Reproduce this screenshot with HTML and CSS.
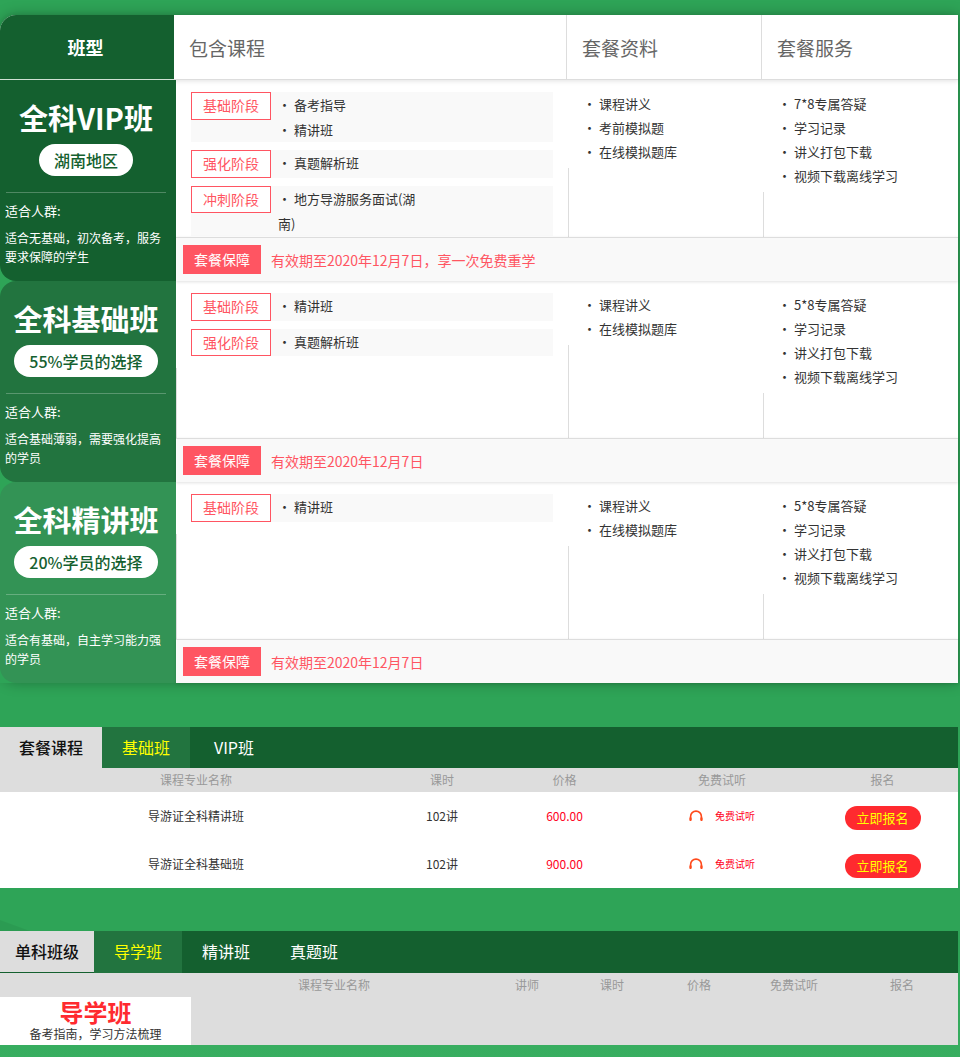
FILE: index.html
```html
<!DOCTYPE html>
<html lang="zh-CN">
<head>
<meta charset="utf-8">
<title>套餐对比</title>
<link rel="stylesheet" href="styles.css">
</head>
<body>
<main class="page">
  <section class="compare">
    <div class="compare-head">
      <div class="head-type">班型</div>
      <div class="head-cell head-course">包含课程</div>
      <div class="head-cell head-mat">套餐资料</div>
      <div class="head-cell head-srv">套餐服务</div>
    </div>

    <div class="plan">
      <div class="plan-side side-dark">
        <h2 class="plan-title">全科VIP班</h2>
        <div class="plan-pill">湖南地区</div>
        <hr class="plan-rule">
        <div class="plan-label">适合人群:</div>
        <p class="plan-desc">适合无基础，初次备考，服务要求保障的学生</p>
      </div>
      <div class="plan-main">
        <div class="plan-body">
          <div class="col-course"><div class="course-list">
            <div class="stage"><span class="stage-tag">基础阶段</span><div class="stage-items"><span class="stage-item">· 备考指导</span><span class="stage-item">· 精讲班</span></div></div>
            <div class="stage"><span class="stage-tag">强化阶段</span><div class="stage-items"><span class="stage-item">· 真题解析班</span></div></div>
            <div class="stage"><span class="stage-tag">冲刺阶段</span><div class="stage-items"><span class="stage-item">· 地方导游服务面试(湖南)</span></div></div>
          </div></div>
          <div class="col-list"><ul class="bullets">
            <li>· 课程讲义</li><li>· 考前模拟题</li><li>· 在线模拟题库</li>
          </ul></div>
          <div class="col-list"><ul class="bullets">
            <li>· 7*8专属答疑</li><li>· 学习记录</li><li>· 讲义打包下载</li><li>· 视频下载离线学习</li>
          </ul></div>
        </div>
        <div class="plan-foot"><span class="foot-tag">套餐保障</span><span class="foot-text">有效期至2020年12月7日，享一次免费重学</span></div>
      </div>
    </div>

    <div class="plan">
      <div class="plan-side side-mid">
        <h2 class="plan-title">全科基础班</h2>
        <div class="plan-pill">55%学员的选择</div>
        <hr class="plan-rule">
        <div class="plan-label">适合人群:</div>
        <p class="plan-desc">适合基础薄弱，需要强化提高的学员</p>
      </div>
      <div class="plan-main">
        <div class="plan-body">
          <div class="col-course"><div class="course-list">
            <div class="stage"><span class="stage-tag">基础阶段</span><div class="stage-items"><span class="stage-item">· 精讲班</span></div></div>
            <div class="stage"><span class="stage-tag">强化阶段</span><div class="stage-items"><span class="stage-item">· 真题解析班</span></div></div>
          </div></div>
          <div class="col-list"><ul class="bullets">
            <li>· 课程讲义</li><li>· 在线模拟题库</li>
          </ul></div>
          <div class="col-list"><ul class="bullets">
            <li>· 5*8专属答疑</li><li>· 学习记录</li><li>· 讲义打包下载</li><li>· 视频下载离线学习</li>
          </ul></div>
        </div>
        <div class="plan-foot"><span class="foot-tag">套餐保障</span><span class="foot-text">有效期至2020年12月7日</span></div>
      </div>
    </div>

    <div class="plan">
      <div class="plan-side side-light">
        <h2 class="plan-title">全科精讲班</h2>
        <div class="plan-pill">20%学员的选择</div>
        <hr class="plan-rule">
        <div class="plan-label">适合人群:</div>
        <p class="plan-desc">适合有基础，自主学习能力强的学员</p>
      </div>
      <div class="plan-main">
        <div class="plan-body">
          <div class="col-course"><div class="course-list">
            <div class="stage"><span class="stage-tag">基础阶段</span><div class="stage-items"><span class="stage-item">· 精讲班</span></div></div>
          </div></div>
          <div class="col-list"><ul class="bullets">
            <li>· 课程讲义</li><li>· 在线模拟题库</li>
          </ul></div>
          <div class="col-list"><ul class="bullets">
            <li>· 5*8专属答疑</li><li>· 学习记录</li><li>· 讲义打包下载</li><li>· 视频下载离线学习</li>
          </ul></div>
        </div>
        <div class="plan-foot"><span class="foot-tag">套餐保障</span><span class="foot-text">有效期至2020年12月7日</span></div>
      </div>
    </div>
  </section>

  <section class="panel panel-package">
    <div class="tabs">
      <div class="tab-title tab-title-wide">套餐课程</div>
      <div class="tab tab-active">基础班</div>
      <div class="tab">VIP班</div>
    </div>
    <div class="grid-package grid-head">
      <div>课程专业名称</div><div>课时</div><div>价格</div><div>免费试听</div><div>报名</div>
    </div>
    <div class="grid-package grid-row">
      <div>导游证全科精讲班</div><div>102讲</div><div class="price">600.00</div>
      <div class="trial"><svg class="trial-icon" viewBox="0 0 14 12" aria-hidden="true"><path d="M1.6 10V6.5a5.4 5.4 0 0 1 10.8 0V10"/><rect x="0.4" y="7.2" width="2.2" height="3.8" rx="0.8"/><rect x="11.4" y="7.2" width="2.2" height="3.8" rx="0.8"/></svg><span class="trial-text">免费试听</span></div>
      <div><span class="signup">立即报名</span></div>
    </div>
    <div class="grid-package grid-row">
      <div>导游证全科基础班</div><div>102讲</div><div class="price">900.00</div>
      <div class="trial"><svg class="trial-icon" viewBox="0 0 14 12" aria-hidden="true"><path d="M1.6 10V6.5a5.4 5.4 0 0 1 10.8 0V10"/><rect x="0.4" y="7.2" width="2.2" height="3.8" rx="0.8"/><rect x="11.4" y="7.2" width="2.2" height="3.8" rx="0.8"/></svg><span class="trial-text">免费试听</span></div>
      <div><span class="signup">立即报名</span></div>
    </div>
  </section>

  <section class="panel panel-single">
    <div class="tabs">
      <div class="tab-title tab-title-narrow">单科班级</div>
      <div class="tab tab-active">导学班</div>
      <div class="tab">精讲班</div>
      <div class="tab">真题班</div>
    </div>
    <div class="grid-single grid-head">
      <div>课程专业名称</div><div>讲师</div><div>课时</div><div>价格</div><div>免费试听</div><div>报名</div>
    </div>
    <div class="single-body">
      <div class="intro">
        <div class="intro-title">导学班</div>
        <div class="intro-sub">备考指南，学习方法梳理</div>
      </div>
    </div>
  </section>
</main>
</body>
</html>
```

FILE: styles.css
```css
* { box-sizing: border-box; }
html, body { height: 100%; }
body {
  margin: 0;
  overflow: hidden;
  font-family: "Noto Sans CJK SC", "Noto Sans", sans-serif;
  color: #333;
  background: linear-gradient(to bottom, #2ea457 0, #2ea457 960px, #38ae60 1057px);
}
.page { width: 958px; padding-top: 15px; }

/* comparison table */
.compare { box-shadow: 0 0 14px rgba(0, 0, 0, .28); border-radius: 16px 0 0 16px; }
.compare-head { display: flex; height: 65px; background: #fff; box-shadow: 0 1px 5px rgba(0, 0, 0, .12); position: relative; border-radius: 16px 0 0 0; }
.head-type { width: 174px; background: #14602f; color: #fff; font-size: 18px; font-weight: 700; line-height: 65px; text-align: center; border-radius: 16px 0 0 0; padding-right: 3px; border-bottom: 1px solid #cfe0d4; }
.head-cell { font-size: 19px; line-height: 66px; color: #666; padding-left: 15px; border-bottom: 1px solid #ddd; }
.head-course { width: 392px; }
.head-mat { width: 195px; border-left: 1px solid #ddd; }
.head-srv { width: 197px; border-left: 1px solid #ddd; }

.plan { display: flex; height: 201px; background: #fff; }
.plan-side { width: 176px; flex: none; padding: 18px 4px 0 0; border-radius: 0 0 0 16px; color: #fff; text-align: center; position: relative; }
.plan-side { border-radius: 16px 0 0 16px; }
.plan:first-of-type .plan-side { border-top-left-radius: 0; }
.compare-head + .plan .plan-side { border-top-left-radius: 0; }
.plan { background: linear-gradient(to right, #2ea457 20px, #fff 20px); }
.side-dark { background: #14602f; }
.side-mid { background: #22743f; }
.side-light { background: #339355; }
.plan-title { margin: 0; font-size: 29px; line-height: 38px; font-weight: 700; white-space: nowrap; }
.plan-pill { display: inline-block; margin-top: 8px; height: 32px; padding: 0 15px; border-radius: 16px; background: #fff; color: #14602f; font-size: 16px; font-weight: 500; line-height: 32px; vertical-align: top; }
.plan-rule { margin: 16px 6px 0; height: 1px; border: 0; background: rgba(255, 255, 255, .25); }
.plan-label { padding-left: 5px; font-size: 13px; line-height: 24px; text-align: left; margin-top: 6px; }
.plan-desc { margin: 5px 0 0; padding: 0 5px; font-size: 12px; line-height: 19px; text-align: left; }

.plan-main { flex: 1; display: flex; flex-direction: column; min-width: 0; }
.plan-body { height: 157px; display: flex; background: #fff; }
.col-course { width: 392px; border-left: 1px solid #ddd; }
.course-list { margin-left: -1px; padding: 12px 0 12px 15px; background: #fff; display: flex; flex-direction: column; gap: 8px; }
.stage { width: 362px; display: flex; background: #f9f9f9; }
.stage-tag { flex: none; width: 80px; height: 27.5px; border: 1px solid #ff5562; background: #fff; color: #ff5562; font-size: 14px; line-height: 25px; text-align: center; }
.stage-items { display: flex; flex-wrap: wrap; padding-left: 7px; width: 282px; }
.stage-item { width: 138px; font-size: 13px; line-height: 25px; color: #333; }

.col-list { width: 195px; border-left: 1px solid #ddd; }
.col-list + .col-list { width: 195px; }
.bullets { margin: 0 0 0 -1px; padding: 12px 0 4px 15px; list-style: none; background: #fff; }
.bullets li { font-size: 13px; line-height: 24px; color: #333; }

.plan-foot { height: 44px; display: flex; align-items: center; padding-left: 7px; background: #f9f9f9; border-top: 1px solid #ddd; box-shadow: 0 1px 3px rgba(0, 0, 0, .12); position: relative; }
.foot-tag { width: 78px; height: 29px; background: #ff5562; color: #fff; font-size: 14px; line-height: 29px; text-align: center; }
.foot-text { margin-left: 10px; font-size: 14px; color: #ff5562; }

/* course panels */
.panel { position: relative; }
.panel-package { margin-top: 44px; }
.panel-single { margin-top: 43px; }
.panel-single::before { content: ""; position: absolute; left: 0; top: -11px; width: 30px; height: 11px; background: rgba(0, 0, 0, .05); clip-path: polygon(0 0, 100% 100%, 0 100%); }
.tabs { display: flex; background: #14602f; }
.panel-package .tabs { height: 41px; }
.panel-single .tabs { height: 42px; }
.tab-title { background: #ddd; color: #111; font-size: 16px; font-weight: 500; line-height: 41px; text-align: center; }
.tab-title-wide { width: 102px; }
.tab-title-narrow { width: 94px; border-bottom: 1px solid #14602f; }
.tab { width: 88px; color: #fff; font-size: 16px; line-height: 41px; text-align: center; }
.tab-active { background: #22743f; color: #ff0; }

.grid-package { display: grid; grid-template-columns: 392px 100px 145px 170px 151px; text-align: center; }
.grid-single { display: grid; grid-template-columns: 182px 304px 82px 88px 86px 104px 112px; text-align: center; }
.grid-single > :first-child { grid-column: 2; }
.grid-head { height: 24px; background: #ddd; color: #999; font-size: 12px; line-height: 24px; }
.grid-row { height: 48px; background: #fff; font-size: 12px; line-height: 48px; color: #333; align-items: center; }
.price { color: #f02; }
.trial { display: flex; align-items: center; justify-content: center; gap: 12px; padding-right: 0; }
.trial-icon { width: 14px; height: 12px; fill: #ff4a1c; }
.trial-icon path { fill: none; stroke: #ff4a1c; stroke-width: 1.6; }
.trial-text { font-size: 10px; color: #f02; line-height: 14px; }
.signup { display: inline-block; width: 76px; height: 24px; border-radius: 12px; background: #ff2a2f; color: #ff0; font-size: 13px; line-height: 24px; vertical-align: middle; }

.single-body { height: 48px; background: #ddd; }
.intro { width: 191px; height: 48px; background: #fff; text-align: center; }
.intro-title { font-size: 24px; font-weight: 700; line-height: 29px; color: #ff2a2f; }
.intro-sub { font-size: 12px; line-height: 15px; color: #333; }
```
